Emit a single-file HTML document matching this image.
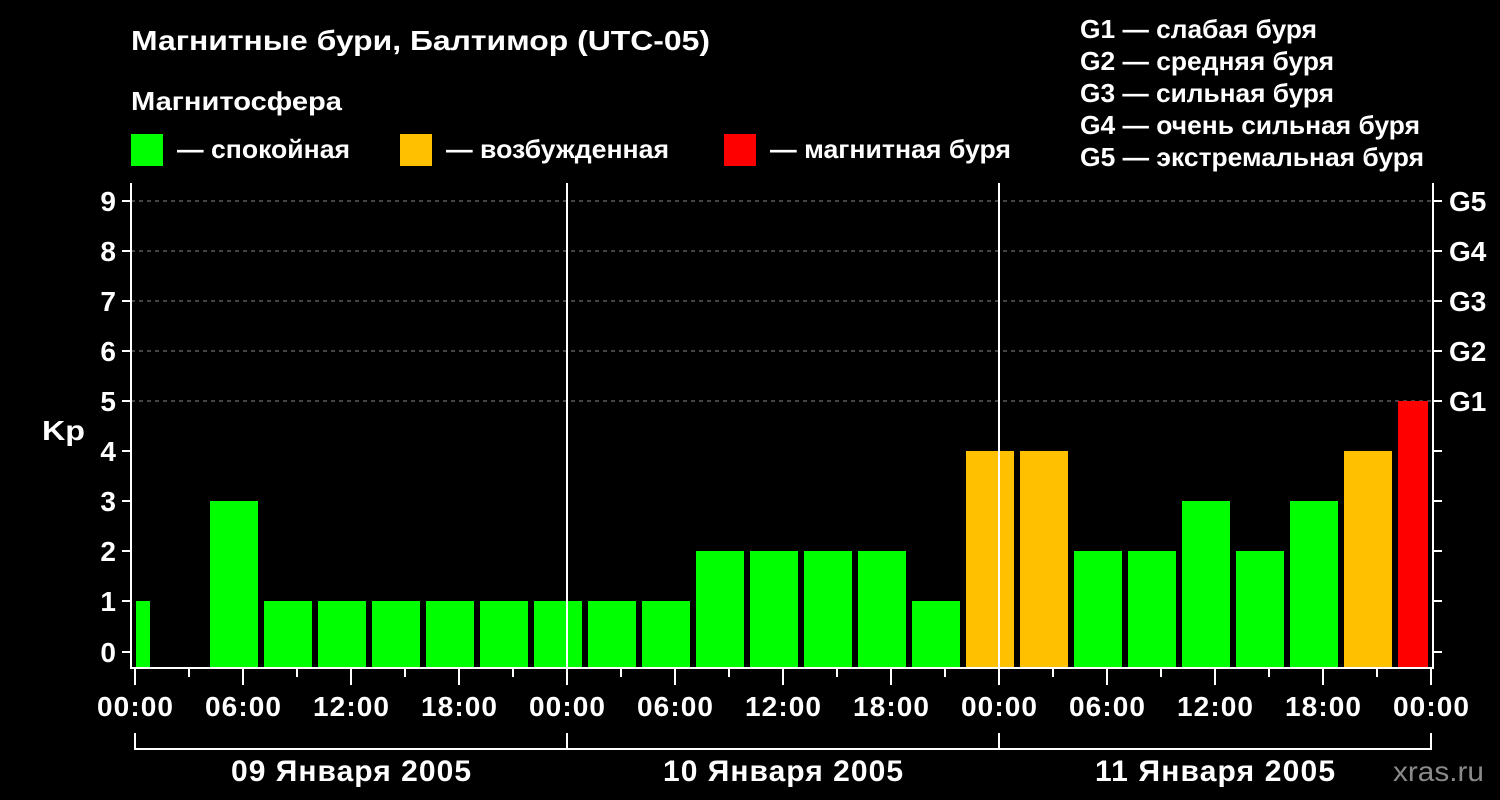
<!DOCTYPE html>
<html><head><meta charset="utf-8"><style>
html,body{margin:0;padding:0;background:#000;width:1500px;height:800px;overflow:hidden}
svg{display:block}
text{font-family:"Liberation Sans",Arial,sans-serif;font-weight:bold;fill:#fff}
</style></head><body>
<svg width="1500" height="800" viewBox="0 0 1500 800">
<text x="131" y="50" font-size="28" textLength="579" lengthAdjust="spacingAndGlyphs">Магнитные бури, Балтимор (UTC-05)</text>
<text x="131" y="110" font-size="26" textLength="211" lengthAdjust="spacingAndGlyphs">Магнитосфера</text>
<rect x="131" y="134" width="32" height="32" fill="#00ff00"/>
<text x="177" y="158" font-size="26" textLength="173" lengthAdjust="spacingAndGlyphs">— спокойная</text>
<rect x="400" y="134" width="32" height="32" fill="#ffc000"/>
<text x="446" y="158" font-size="26" textLength="223" lengthAdjust="spacingAndGlyphs">— возбужденная</text>
<rect x="724" y="134" width="32" height="32" fill="#ff0000"/>
<text x="770" y="158" font-size="26" textLength="241" lengthAdjust="spacingAndGlyphs">— магнитная буря</text>
<g font-size="26">
<text x="1080" y="38" textLength="237" lengthAdjust="spacingAndGlyphs">G1 — слабая буря</text>
<text x="1080" y="70" textLength="254" lengthAdjust="spacingAndGlyphs">G2 — средняя буря</text>
<text x="1080" y="102" textLength="254" lengthAdjust="spacingAndGlyphs">G3 — сильная буря</text>
<text x="1080" y="134" textLength="340" lengthAdjust="spacingAndGlyphs">G4 — очень сильная буря</text>
<text x="1080" y="166" textLength="344" lengthAdjust="spacingAndGlyphs">G5 — экстремальная буря</text>
</g>
<g stroke="#888" stroke-width="1" stroke-dasharray="4,4">
<line x1="131" y1="201" x2="1433" y2="201"/><line x1="131" y1="251" x2="1433" y2="251"/>
<line x1="131" y1="301" x2="1433" y2="301"/><line x1="131" y1="351" x2="1433" y2="351"/>
<line x1="131" y1="401" x2="1433" y2="401"/>
</g>
<g>
<rect x="136" y="601" width="14" height="67" fill="#00ff00"/>
<rect x="210" y="501" width="48" height="167" fill="#00ff00"/>
<rect x="264" y="601" width="48" height="67" fill="#00ff00"/>
<rect x="318" y="601" width="48" height="67" fill="#00ff00"/>
<rect x="372" y="601" width="48" height="67" fill="#00ff00"/>
<rect x="426" y="601" width="48" height="67" fill="#00ff00"/>
<rect x="480" y="601" width="48" height="67" fill="#00ff00"/>
<rect x="534" y="601" width="48" height="67" fill="#00ff00"/>
<rect x="588" y="601" width="48" height="67" fill="#00ff00"/>
<rect x="642" y="601" width="48" height="67" fill="#00ff00"/>
<rect x="696" y="551" width="48" height="117" fill="#00ff00"/>
<rect x="750" y="551" width="48" height="117" fill="#00ff00"/>
<rect x="804" y="551" width="48" height="117" fill="#00ff00"/>
<rect x="858" y="551" width="48" height="117" fill="#00ff00"/>
<rect x="912" y="601" width="48" height="67" fill="#00ff00"/>
<rect x="966" y="451" width="48" height="217" fill="#ffc000"/>
<rect x="1020" y="451" width="48" height="217" fill="#ffc000"/>
<rect x="1074" y="551" width="48" height="117" fill="#00ff00"/>
<rect x="1128" y="551" width="48" height="117" fill="#00ff00"/>
<rect x="1182" y="501" width="48" height="167" fill="#00ff00"/>
<rect x="1236" y="551" width="48" height="117" fill="#00ff00"/>
<rect x="1290" y="501" width="48" height="167" fill="#00ff00"/>
<rect x="1344" y="451" width="48" height="217" fill="#ffc000"/>
<rect x="1398" y="401" width="30" height="267" fill="#ff0000"/>
</g>
<g stroke="#fff" stroke-width="2" fill="none">
<polyline points="131,183 131,668 1433,668 1433,183"/>
<line x1="567" y1="183" x2="567" y2="668"/>
<line x1="999" y1="183" x2="999" y2="668"/>
<path d="M122 201h9M122 251h9M122 301h9M122 351h9M122 401h9M122 451h9M122 501h9M122 551h9M122 601h9M122 652h9"/>
<path d="M1433 201h9M1433 251h9M1433 301h9M1433 351h9M1433 401h9M1433 451h9M1433 501h9M1433 551h9M1433 601h9M1433 652h9"/>
<path d="M135 668v17M243 668v17M351 668v17M459 668v17M567 668v17M675 668v17M783 668v17M891 668v17M999 668v17M1107 668v17M1215 668v17M1323 668v17M1431 668v17"/>
<path d="M189 668v9M297 668v9M405 668v9M513 668v9M621 668v9M729 668v9M837 668v9M945 668v9M1053 668v9M1161 668v9M1269 668v9M1377 668v9"/>
<path d="M135 733v16H1431v-16M567 733v16M999 733v16"/>
</g>
<g font-size="28" text-anchor="end">
<text x="116" y="211">9</text><text x="116" y="261">8</text><text x="116" y="311">7</text>
<text x="116" y="361">6</text><text x="116" y="411">5</text><text x="116" y="461">4</text>
<text x="116" y="511">3</text><text x="116" y="561">2</text><text x="116" y="611">1</text>
<text x="116" y="662">0</text>
</g>
<text x="42" y="440" font-size="28" textLength="43" lengthAdjust="spacingAndGlyphs">Kp</text>
<g font-size="28">
<text x="1449" y="211">G5</text><text x="1449" y="261">G4</text><text x="1449" y="311">G3</text>
<text x="1449" y="361">G2</text><text x="1449" y="411">G1</text>
</g>
<g font-size="28" text-anchor="middle" lengthAdjust="spacingAndGlyphs">
<text x="135" y="716" textLength="76">00:00</text><text x="243" y="716" textLength="76">06:00</text><text x="351" y="716" textLength="76">12:00</text>
<text x="459" y="716" textLength="76">18:00</text><text x="567" y="716" textLength="76">00:00</text><text x="675" y="716" textLength="76">06:00</text>
<text x="783" y="716" textLength="76">12:00</text><text x="891" y="716" textLength="76">18:00</text><text x="999" y="716" textLength="76">00:00</text>
<text x="1107" y="716" textLength="76">06:00</text><text x="1215" y="716" textLength="76">12:00</text><text x="1323" y="716" textLength="76">18:00</text>
<text x="1431" y="716" textLength="76">00:00</text>
<text x="351" y="781" font-size="30" textLength="240">09 Января 2005</text>
<text x="783" y="781" font-size="30" textLength="240">10 Января 2005</text>
<text x="1215" y="781" font-size="30" textLength="240">11 Января 2005</text>
</g>
<text x="1393" y="781" font-size="28" textLength="91" lengthAdjust="spacingAndGlyphs" style="fill:#8a8a8a;font-weight:normal">xras.ru</text>
</svg>
</body></html>
